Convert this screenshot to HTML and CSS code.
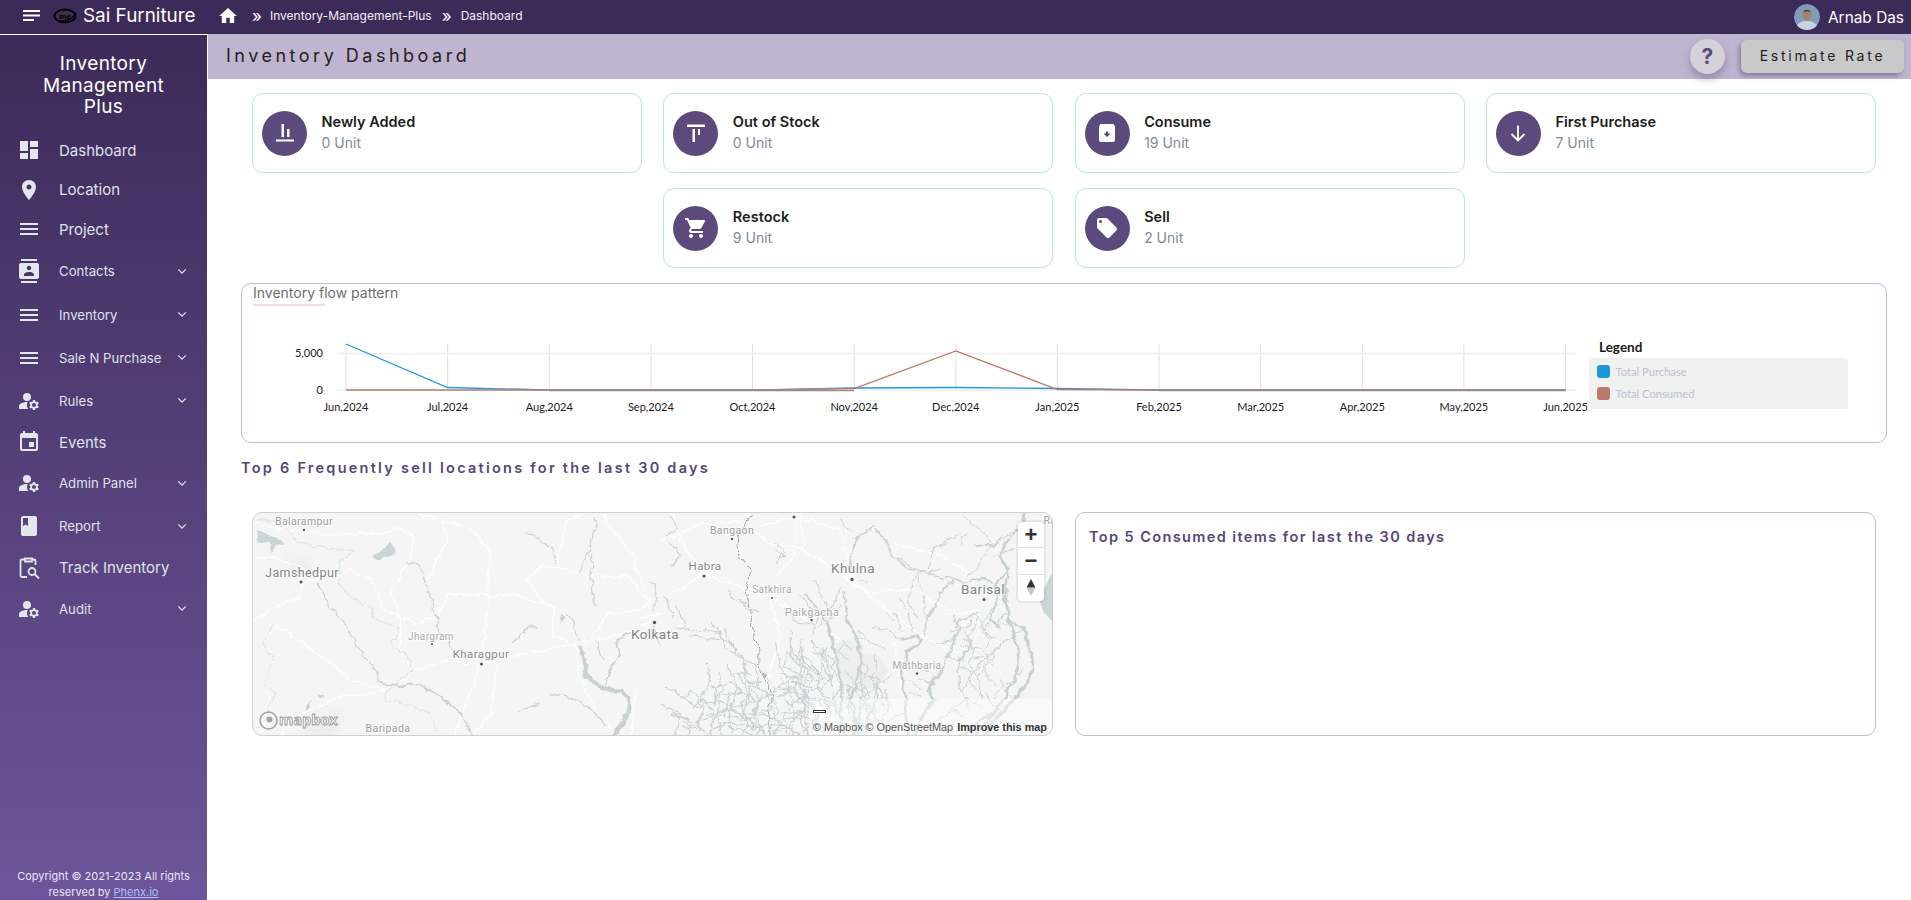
FILE: index.html
```html
<!DOCTYPE html>
<html lang="en">
<head>
<meta charset="utf-8">
<title>Inventory Dashboard</title>
<link rel="stylesheet" href="styles.css">
</head>
<body>
<header class="topbar">
  <svg class="burger" viewBox="0 0 17 12"><rect width="17" height="2"/><rect y="4.5" width="17" height="2"/><rect y="9" width="11" height="2"/></svg>
  <svg class="logo" viewBox="0 0 24 16"><ellipse cx="12" cy="8" rx="10.5" ry="6.5" class="logo-ring"/><path class="logo-swoosh" d="M3 12 C10 15 19 12 23 5"/><text x="12" y="11" class="logo-text">me</text></svg>
  <span class="company">Sai Furniture</span>
  <svg class="home" viewBox="2 3 20 17"><path d="M10 20v-6h4v6h5v-8h3L12 3 2 12h3v8z"/></svg>
  <span class="crumb-sep first">»</span>
  <span class="crumb">Inventory-Management-Plus</span>
  <span class="crumb-sep">»</span>
  <span class="crumb">Dashboard</span>
  <span class="user">
    <svg class="avatar" viewBox="0 0 26 26"><circle cx="13" cy="13" r="13" fill="#7f9dbb"/><path d="M2 23c2-5 7-6 11-6s9 1 11 6a13 13 0 0 1-22 0z" fill="#c6d4dd"/><ellipse cx="13" cy="11" rx="4.6" ry="5.6" fill="#a5816e"/><path d="M8.4 9c0-4 9-4 9.2 0l-.6-1.500h-8z" fill="#3c3230"/></svg>
    <span>Arnab Das</span>
  </span>
</header>

<div class="shell">
  <aside class="sidebar">
    <div class="brand">Inventory Management Plus</div>
    <nav class="nav">
      <a class="nav-item big"><svg class="ico" viewBox="0 0 24 24"><path d="M3 13h8V3H3v10zm0 8h8v-6H3v6zm10 0h8V11h-8v10zm0-18v6h8V3h-8z"/></svg><span>Dashboard</span></a>
      <a class="nav-item big"><svg class="ico" viewBox="0 0 24 24"><path d="M12 2C8.130 2 5 5.130 5 9c0 5.250 7 13 7 13s7-7.750 7-13c0-3.870-3.130-7-7-7zm0 9.500c-1.380 0-2.500-1.120-2.500-2.500s1.120-2.500 2.500-2.500 2.500 1.120 2.500 2.500-1.120 2.500-2.500 2.500z"/></svg><span>Location</span></a>
      <a class="nav-item big"><svg class="ico" viewBox="0 0 24 24"><path d="M3 18h18v-2H3v2zm0-5h18v-2H3v2zm0-7v2h18V6H3z"/></svg><span>Project</span></a>
      <a class="nav-item group first-group"><svg class="ico" viewBox="0 0 24 24"><path d="M20 0H4v2h16V0zM4 24h16v-2H4v2zM20 4H4c-1.100 0-2 .9-2 2v12c0 1.100.9 2 2 2h16c1.100 0 2-.9 2-2V6c0-1.100-.9-2-2-2zm-8 2.750c1.240 0 2.250 1.010 2.250 2.250s-1.010 2.250-2.250 2.250S9.750 10.240 9.750 9 10.760 6.750 12 6.750zM17 17H7v-1.500c0-1.670 3.330-2.500 5-2.500s5 .83 5 2.500V17z"/></svg><span>Contacts</span><svg class="chev" viewBox="0 0 12 8"><path d="M1.500 1.500 6 6l4.500-4.500"/></svg></a>
      <a class="nav-item group"><svg class="ico" viewBox="0 0 24 24"><path d="M3 18h18v-2H3v2zm0-5h18v-2H3v2zm0-7v2h18V6H3z"/></svg><span>Inventory</span><svg class="chev" viewBox="0 0 12 8"><path d="M1.500 1.500 6 6l4.500-4.500"/></svg></a>
      <a class="nav-item group"><svg class="ico" viewBox="0 0 24 24"><path d="M3 18h18v-2H3v2zm0-5h18v-2H3v2zm0-7v2h18V6H3z"/></svg><span>Sale N Purchase</span><svg class="chev" viewBox="0 0 12 8"><path d="M1.500 1.500 6 6l4.500-4.500"/></svg></a>
      <a class="nav-item group"><svg class="ico" viewBox="0 0 24 24"><circle cx="10" cy="8" r="4"/><path d="M10.670 13.020c-.22-.01-.44-.02-.67-.02-2.420 0-4.680.67-6.610 1.820-.88.52-1.390 1.500-1.390 2.530V20h9.260c-.79-1.130-1.260-2.510-1.260-4 0-1.070.25-2.070.67-2.980z"/><path d="M20.750 16c0-.22-.03-.42-.06-.63l1.140-1.010-1-1.730-1.450.49c-.32-.27-.68-.48-1.080-.63L18 11h-2l-.3 1.490c-.4.15-.76.36-1.080.63l-1.450-.49-1 1.730 1.140 1.010c-.03.21-.06.41-.06.63s.03.42.06.63l-1.140 1.010 1 1.730 1.450-.49c.32.27.68.48 1.080.63L16 21h2l.3-1.490c.4-.15.76-.36 1.080-.63l1.450.49 1-1.730-1.140-1.010c.03-.21.06-.41.06-.63zM17 18c-1.100 0-2-.9-2-2s.9-2 2-2 2 .9 2 2-.9 2-2 2z"/></svg><span>Rules</span><svg class="chev" viewBox="0 0 12 8"><path d="M1.500 1.500 6 6l4.500-4.500"/></svg></a>
      <a class="nav-item big"><svg class="ico" viewBox="0 0 24 24"><path d="M17 12h-5v5h5v-5zM16 1v2H8V1H6v2H5c-1.110 0-1.990.9-1.990 2L3 19c0 1.100.89 2 2 2h14c1.100 0 2-.9 2-2V5c0-1.100-.9-2-2-2h-1V1h-2zm3 18H5V8h14v11z"/></svg><span>Events</span></a>
      <a class="nav-item group"><svg class="ico" viewBox="0 0 24 24"><circle cx="10" cy="8" r="4"/><path d="M10.670 13.020c-.22-.01-.44-.02-.67-.02-2.420 0-4.680.67-6.610 1.820-.88.52-1.390 1.500-1.390 2.530V20h9.260c-.79-1.130-1.260-2.510-1.260-4 0-1.070.25-2.070.67-2.980z"/><path d="M20.750 16c0-.22-.03-.42-.06-.63l1.140-1.010-1-1.730-1.450.49c-.32-.27-.68-.48-1.080-.63L18 11h-2l-.3 1.490c-.4.15-.76.36-1.080.63l-1.450-.49-1 1.730 1.140 1.010c-.03.21-.06.41-.06.63s.03.42.06.63l-1.140 1.010 1 1.730 1.450-.49c.32.27.68.48 1.080.63L16 21h2l.3-1.490c.4-.15.76-.36 1.080-.63l1.450.49 1-1.730-1.140-1.010c.03-.21.06-.41.06-.63zM17 18c-1.100 0-2-.9-2-2s.9-2 2-2 2 .9 2 2-.9 2-2 2z"/></svg><span>Admin Panel</span><svg class="chev" viewBox="0 0 12 8"><path d="M1.500 1.500 6 6l4.500-4.500"/></svg></a>
      <a class="nav-item group"><svg class="ico" viewBox="0 0 24 24"><path d="M18 2H6c-1.100 0-2 .9-2 2v16c0 1.100.9 2 2 2h12c1.100 0 2-.9 2-2V4c0-1.100-.9-2-2-2zM6 4h5v8l-2.500-1.500L6 12V4z"/></svg><span>Report</span><svg class="chev" viewBox="0 0 12 8"><path d="M1.500 1.500 6 6l4.500-4.500"/></svg></a>
      <a class="nav-item big"><svg class="ico" viewBox="0 0 24 24"><path class="ico-line" d="M10 21H5a1.500 1.500 0 0 1-1.500-1.500V5A1.500 1.500 0 0 1 5 3.500h3M15 3.500h2A1.500 1.500 0 0 1 18.500 5v4"/><path class="ico-line" d="M8 2.500h7v3H8z"/><circle class="ico-line" cx="15" cy="15.500" r="3.500"/><path class="ico-line" d="m17.500 18 4.500 4.500"/></svg><span>Track Inventory</span></a>
      <a class="nav-item group"><svg class="ico" viewBox="0 0 24 24"><circle cx="10" cy="8" r="4"/><path d="M10.670 13.020c-.22-.01-.44-.02-.67-.02-2.420 0-4.680.67-6.610 1.820-.88.52-1.390 1.500-1.390 2.530V20h9.260c-.79-1.130-1.260-2.510-1.260-4 0-1.070.25-2.070.67-2.980z"/><path d="M20.750 16c0-.22-.03-.42-.06-.63l1.140-1.010-1-1.730-1.450.49c-.32-.27-.68-.48-1.080-.63L18 11h-2l-.3 1.490c-.4.15-.76.36-1.080.63l-1.450-.49-1 1.730 1.140 1.010c-.03.21-.06.41-.06.63s.03.42.06.63l-1.140 1.010 1 1.730 1.450-.49c.32.27.68.48 1.080.63L16 21h2l.3-1.490c.4-.15.76-.36 1.080-.63l1.450.49 1-1.730-1.140-1.010c.03-.21.06-.41.06-.63zM17 18c-1.100 0-2-.9-2-2s.9-2 2-2 2 .9 2 2-.9 2-2 2z"/></svg><span>Audit</span><svg class="chev" viewBox="0 0 12 8"><path d="M1.500 1.500 6 6l4.500-4.500"/></svg></a>
    </nav>
    <footer class="copy">Copyright © 2021-2023 All rights<br>reserved by <a class="copy-link">Phenx.io</a></footer>
  </aside>

  <main class="content">
    <div class="title-bar">
      <h1 class="page-title">Inventory Dashboard</h1>
      <button class="help">?</button>
      <button class="estimate">Estimate Rate</button>
    </div>

    <section class="cards">
      <article class="card">
        <span class="badge"><svg viewBox="0 0 24 24"><rect x="8.500" y="3" width="2.500" height="13"/><rect x="14" y="8" width="2.500" height="8"/><rect x="3" y="18.500" width="18" height="2"/></svg></span>
        <div><h3 class="card-title">Newly Added</h3><p class="card-sub">0 Unit</p></div>
      </article>
      <article class="card">
        <span class="badge"><svg viewBox="0 0 24 24"><rect x="3" y="3.500" width="18" height="2.500"/><rect x="8.500" y="8" width="2.500" height="13"/><rect x="14" y="8" width="2" height="6"/></svg></span>
        <div><h3 class="card-title">Out of Stock</h3><p class="card-sub">0 Unit</p></div>
      </article>
      <article class="card">
        <span class="badge"><svg viewBox="0 0 24 24"><path d="M4 5.500 5.500 3h13L20 5.500V19a2 2 0 0 1-2 2H6a2 2 0 0 1-2-2z"/><path class="badge-cut" d="M12 16 8.500 12.500H11V10.500h2v2h2.500z"/></svg></span>
        <div><h3 class="card-title">Consume</h3><p class="card-sub">19 Unit</p></div>
      </article>
      <article class="card">
        <span class="badge"><svg viewBox="0 0 24 24"><path class="badge-line" d="M12 4.500v15M5.500 13l6.500 6.500 6.500-6.500"/></svg></span>
        <div><h3 class="card-title">First Purchase</h3><p class="card-sub">7 Unit</p></div>
      </article>
      <article class="card">
        <span class="badge"><svg viewBox="0 0 24 24"><path d="M7 18c-1.100 0-1.990.9-1.990 2S5.900 22 7 22s2-.9 2-2-.9-2-2-2zM1 2v2h2l3.600 7.590-1.350 2.450c-.16.28-.25.61-.25.96 0 1.100.9 2 2 2h12v-2H7.420c-.14 0-.25-.11-.25-.25l.03-.12.9-1.630h7.450c.75 0 1.410-.41 1.750-1.030l3.580-6.490c.08-.14.12-.31.12-.48 0-.55-.45-1-1-1H5.210l-.94-2H1zm16 16c-1.100 0-1.990.9-1.990 2s.89 2 1.990 2 2-.9 2-2-.9-2-2-2z"/></svg></span>
        <div><h3 class="card-title">Restock</h3><p class="card-sub">9 Unit</p></div>
      </article>
      <article class="card">
        <span class="badge"><svg viewBox="0 0 24 24"><path d="M21.410 11.580l-9-9C12.050 2.220 11.550 2 11 2H4c-1.100 0-2 .9-2 2v7c0 .55.22 1.050.59 1.420l9 9c.36.36.86.58 1.410.58.55 0 1.050-.22 1.410-.59l7-7c.37-.36.59-.86.59-1.410 0-.55-.23-1.060-.59-1.420zM5.500 7C4.670 7 4 6.330 4 5.500S4.670 4 5.500 4 7 4.670 7 5.500 6.330 7 5.500 7z"/></svg></span>
        <div><h3 class="card-title">Sell</h3><p class="card-sub">2 Unit</p></div>
      </article>
    </section>

    <section class="flow">
      <div class="flow-title">Inventory flow pattern</div>
      <div class="flow-row">
        <svg class="flow-chart" viewBox="0 0 1347 135">
          <g class="grid-v">
            <path d="M104 38V84M205.600 38V84M307.300 38V84M408.900 38V84M510.500 38V84M612.200 38V84M713.800 38V84M815.400 38V84M917 38V84M1018.700 38V84M1120.300 38V84M1221.900 38V84M1323.600 38V84"/>
          </g>
          <g class="grid-h"><path d="M95 47.500H1334M95 84H1334"/></g>
          <path class="line-blue" d="M104 38 205.600 81.500 307.300 84 510.500 84 612.200 82 713.800 81.500 815.400 82.500 917 84 1323.600 84"/>
          <path class="line-red" d="M104 84 510.500 84 612.200 82.500 713.800 45 815.400 83.500 917 84 1323.600 84"/>
          <path class="line-grey" d="M307.300 84.500H612M917 84.500H1323.600"/>
          <g class="axis-y">
            <text x="81" y="51">5,000</text>
            <text x="81" y="87.500">0</text>
          </g>
          <g class="axis-x">
            <text x="104" y="105">Jun,2024</text>
            <text x="205.600" y="105">Jul,2024</text>
            <text x="307.300" y="105">Aug,2024</text>
            <text x="408.900" y="105">Sep,2024</text>
            <text x="510.500" y="105">Oct,2024</text>
            <text x="612.200" y="105">Nov,2024</text>
            <text x="713.800" y="105">Dec,2024</text>
            <text x="815.400" y="105">Jan,2025</text>
            <text x="917" y="105">Feb,2025</text>
            <text x="1018.700" y="105">Mar,2025</text>
            <text x="1120.300" y="105">Apr,2025</text>
            <text x="1221.900" y="105">May,2025</text>
            <text x="1323.600" y="105">Jun,2025</text>
          </g>
        </svg>
        <div class="legend">
          <div class="legend-title">Legend</div>
          <ul class="legend-box">
            <li class="legend-item"><i class="swatch blue"></i>Total Purchase</li>
            <li class="legend-item"><i class="swatch red"></i>Total Consumed</li>
          </ul>
        </div>
      </div>
    </section>

    <h2 class="sec-title">Top 6 Frequently sell locations for the last 30 days</h2>

    <section class="bottom">
      <div class="map">
        <svg class="map-svg" viewBox="0 0 800 224">
          <defs>
            <filter id="wiggle" x="0" y="0" width="100%" height="100%" color-interpolation-filters="sRGB">
              <feTurbulence type="fractalNoise" baseFrequency=".035" numOctaves="3" seed="7" result="n"/>
              <feDisplacementMap in="SourceGraphic" in2="n" scale="22" xChannelSelector="R" yChannelSelector="G"/>
            </filter>
            <filter id="soft" color-interpolation-filters="sRGB"><feGaussianBlur stdDeviation="12"/></filter>
            <clipPath id="lower"><rect x="-200" y="300" width="1200" height="400"/></clipPath>
          </defs>
          <g transform="translate(-12.500,-12.500) scale(.33333)">
            <g class="shade" filter="url(#soft)">
              <path d="M170 700 230 650 300 630 280 715ZM140 170 220 190 200 220 150 200Z"/>
            </g>
            <g filter="url(#wiggle)">
            <g class="roads">
              <path d="M40 60 110 85 190 90 260 105 360 100 410 100 480 85 520 110 510 170 490 200 450 280 480 350 530 370 590 350 620 280 740 285 830 285 940 320 935 400 1000 430"/>
              <path d="M40 360 100 320 180 290 190 200 110 175 40 170"/>
              <path d="M190 245 330 210 400 240 420 320 480 350 480 470 520 510 620 480 720 490 830 465 1000 430 1060 420 1180 390 1240 350"/>
              <path d="M530 40 610 60 620 120 560 240M740 285 750 150 700 90 610 60M745 285 735 400 720 490 680 600 640 710"/>
              <path d="M860 240 900 195 960 205 1050 225 1170 230 1230 320M950 190 980 60 1020 40M1080 40 1180 170 1230 320"/>
              <path d="M100 480 70 540 90 620 60 700M60 430 110 375 190 430 260 480 330 540 440 570 300 590 180 640 120 700"/>
              <path d="M440 570 520 510M770 490 750 640 690 710M1000 430 1030 560 1080 650 1130 700M1190 560 1170 710"/>
              <path d="M1050 420 1100 340 1200 330M860 240 900 300 940 320M1200 330 1260 280M1210 370 1260 400M1200 350 1260 340"/>
            </g>
            <g class="borderline">
              <path d="M165 120 200 135 280 145 350 150 300 180 290 250 330 290 390 320 400 350 470 380 470 420 450 420 460 445 500 460 520 510 480 530 470 560 435 570 440 600 490 610 570 640 590 690"/>
              <path d="M40 60 70 55 110 70 150 95 165 120M100 375 65 430 100 480 70 540 100 580 70 670"/>
            </g>
            <path class="water-fill" d="M45 90 75 100 90 105 130 125 105 135 95 160 85 130 55 125Z"/>
            <path class="water-fill" d="M395 170 420 150 440 140 450 125 470 150 455 165 430 170 415 180Z"/>
            <path class="water-fill" d="M958 338 970 345 970 362 960 362Z"/>
            <path class="water-fill" d="M195 620 210 595 208 625 197 630ZM228 575 250 585 238 595Z"/>
            <g class="w2">
              <path d="M230 250 245 275 270 320 320 380 345 430 375 470 405 510 410 545"/>
              <path d="M855 97 880 100 905 120 935 145 950 190M495 183 530 190 545 220 560 260 575 310 590 360 590 390 620 420 640 445"/>
              <path d="M1060 50 1070 70 1050 130 1015 220M1050 160 1060 200 1050 230 1065 320M835 630 900 610M925 580 990 590 1040 620 1080 650 1095 680M980 345 1000 360 1015 430M1065 420 1085 480"/>
              <path d="M810 430 850 400 860 380 895 378M1230 240 1250 280 1240 330M1240 380 1260 440"/>
            </g>
            <g class="w3">
              <path d="M410 545 440 555 480 560 520 550 545 560 570 570 620 600 660 640 680 670 695 710"/>
              <path d="M1170 395 1130 420 1135 460 1105 520 1095 560"/>
            </g>
            <path class="w9" d="M1015 440 1032 470 1035 520 1060 545 1090 565 1150 572 1170 620 1150 660 1115 715"/>
            <path class="w6" d="M1090 660 1150 640M1100 680 1070 715"/>
            </g>
          </g>

          <g transform="translate(407.500,-12.500) scale(.33333)">
            <g filter="url(#wiggle)">
            <g class="roads">
              <path d="M0 120 130 70 230 60 330 130 420 140 570 240 680 330M0 300 130 220 330 290 450 360 560 430M40 40 60 120 130 225M420 40 430 140M330 290 360 420 320 530"/>
            </g>
            <path class="border-glow" d="M270 40 235 110 230 160 275 210 255 270 275 340 270 380 295 440 295 500 340 590 320 630 335 710"/>
            <path class="border-main" d="M270 40 235 110 230 160 275 210 255 270 275 340 270 380 295 440 295 500 340 590 320 630 335 710"/>
            <g class="w2" id="delta-west">
              <path d="M200 275 230 300 260 310M50 380 130 390 180 400 190 440 250 470 260 540 300 560M10 290 40 350M150 360 190 420"/>
              <path d="M30 50 50 80 20 110M30 125 60 165 30 195M345 150 375 165 340 190"/>
              <path d="M385 410 395 470 420 510 400 570 440 620 420 660 450 710M450 420 500 470 510 530 480 570 510 640 490 710"/>
              <path d="M90 570 130 620 110 670 150 710M140 490 150 540 120 590M200 490 230 560 210 620 260 660 250 710M270 560 240 620 280 680"/>
              <path d="M350 590 400 560 440 620 380 680 420 710M100 620 170 600 220 620 300 600M120 660 180 640 260 660 300 640M180 580 170 640 190 710"/>
              <path d="M395 540 460 600M550 500 590 560 560 620 600 710"/>
              <path d="M0 610 60 640 40 710M20 560 70 590 90 570M150 560 210 550 250 580M60 680 130 690M200 680 280 700M30 640 90 660M220 520 270 520M160 620 170 560M300 640 360 660 340 710M400 640 470 660M360 520 420 540M430 480 470 520"/>
              <path d="M520 560 480 480 500 440M620 650 650 600 640 540M450 500 420 470"/>
            </g>
            <g clip-path="url(#lower)"><use href="#delta-west" transform="translate(35,25)"/></g>
            </g>
          </g>

          <g transform="translate(507.500,-.5) scale(.33333)">
            <path class="forest" d="M225 395 270 380 300 420 350 425 385 470 350 530 290 520 230 500Z"/>
            <g filter="url(#wiggle)">
            <g class="roads">
              <path d="M0 40 100 15 240 50 270 190 320 240 420 320 500 380 600 420M110 20 100 130 40 200M400 90 540 130 620 180 670 270M320 240 450 230 580 300 660 290M400 380 420 520M660 300 640 420 720 480"/>
            </g>
            <g class="w1" id="delta-east">
              <path d="M40 90 70 120 45 140M240 20 270 60M605 10 660 50 700 100M690 100 640 180 620 190M560 90 520 110 500 170M410 130 480 180M540 170 500 175M470 180 440 260 470 320M420 260 440 290M470 190 490 260 500 320M165 205 190 260 210 320M120 240 150 290 200 300M300 200 320 215M290 355 320 375M300 360 280 385 310 410M340 425 350 470 330 500 360 540 400 590M390 480 350 520 380 600"/>
              <path d="M495 470 530 495M650 340 690 370 670 420 700 460M640 300 670 340 680 380M700 280 660 350M740 290 710 330 750 340M780 350 700 420 670 470 710 520M640 430 680 440 650 500 670 560M720 510 750 560M790 470 740 520"/>
              <path d="M90 350 100 420 130 470 120 520 150 580 130 640 150 675M125 380 115 430 160 450M150 390 180 430 215 470M180 470 170 530 210 570 190 640 210 675M60 500 100 560 70 620 80 675M300 440 320 470 300 530 330 590 310 675M260 510 270 560M355 480 340 570 360 675"/>
              <path d="M0 470 40 520 30 580 60 640M40 530 90 500 140 490"/>
              <path d="M330 340 380 355 420 380M200 330 240 280M240 225 210 300"/>
              <path d="M100 490 160 510 220 490M110 570 180 560 240 590M70 620 130 610M200 440 160 420M300 480 370 510M380 620 440 600M480 500 530 520M560 360 620 350 640 310M600 400 660 410M560 600 620 560 660 580M700 100 760 50M700 130 760 110M620 60 600 100M510 120 560 80 600 70"/>
            </g>
            <g clip-path="url(#lower)"><use href="#delta-east" transform="translate(-45,35)"/></g>
            <g class="w3">
              <path d="M345 40 300 70 275 100 270 180M345 50 380 90 400 130 450 170 510 180 540 200 570 190 610 210 640 200 700 205M640 100 700 100 720 70M250 240 260 310"/>
              <path d="M580 200 540 240 510 310 495 330 495 370M575 310 600 340 570 410 550 470M735 180 700 220 710 260 690 320 720 350M660 300 600 320 585 345"/>
              <path d="M130 240 170 290 205 340M600 430 590 470 600 540M640 380 600 440"/>
            </g>
            <g class="w5">
              <path d="M255 310 285 370 305 430 290 500 270 560 290 640 280 675M200 330 215 380 230 450 245 520 240 600 250 675"/>
              <path d="M420 380 470 370 480 385 440 420 420 470 435 560 445 675M550 470 500 530 520 560 480 620 460 675"/>
            </g>
            <path class="w8" d="M795 0 790 30 750 70 720 130 740 170 735 260 745 320 790 350 810 420 820 470 790 530 740 580 690 640 670 675"/>
            <path class="w5" d="M745 320 770 400 775 450 760 510 700 600 640 675M600 675 660 620 720 590"/>
            <path class="w-white" d="M760 50 745 80M790 400 800 420M805 490 770 530M740 100 725 130M760 330 780 350"/>
            </g>
            <path class="water-fill" d="M880 180 870 190 835 260 850 300 880 330Z"/>
          </g>

          <g class="dots">
            <circle cx="51" cy="17" r="1.200"/><circle cx="48" cy="69" r="1.500"/>
            <circle cx="179" cy="131" r="1"/><circle cx="228.500" cy="151" r="1.500"/>
            <circle cx="135" cy="224" r="1.300"/>
            <circle cx="401.500" cy="109.500" r="1.700"/>
            <circle cx="541" cy="4" r="1.500"/><circle cx="479" cy="26" r="1.200"/>
            <circle cx="451" cy="63" r="1.500"/><circle cx="519" cy="85" r="1"/>
            <circle cx="558.500" cy="107" r="1.200"/><circle cx="599" cy="66.500" r="1.700"/>
            <circle cx="731" cy="86.500" r="1.500"/><circle cx="664" cy="160.500" r="1.200"/>
          </g>
          <g class="labels">
            <text class="lb-s" x="51" y="12">Balarampur</text>
            <text class="lb-m" x="49" y="64">Jamshedpur</text>
            <text class="lb-xs" x="178" y="127">Jhargram</text>
            <text class="lb-m2" x="228" y="145">Kharagpur</text>
            <text class="lb-s" x="135" y="219">Baripada</text>
            <text class="lb-l" x="402" y="126">Kolkata</text>
            <text class="lb-s" x="479" y="21">Bangaon</text>
            <text class="lb-m2" x="452" y="57">Habra</text>
            <text class="lb-xs" x="519" y="80">Satkhira</text>
            <text class="lb-xs wide" x="559" y="103">Paikgacha</text>
            <text class="lb-l" x="600" y="60">Khulna</text>
            <text class="lb-l" x="730" y="81">Barisal</text>
            <text class="lb-xs" x="664" y="156">Mathbaria</text>
            <text class="lb-s" x="797" y="11">Ra</text>
          </g>
          <g class="mb-logo">
            <circle cx="15.500" cy="207.500" r="8.500"/>
            <circle class="mb-dot" cx="16.500" cy="206.500" r="3"/>
            <text x="26" y="212">mapbox</text>
          </g>
        </svg>
        <div class="map-ctrl">
          <button class="ctrl-btn plus">+</button>
          <button class="ctrl-btn minus">−</button>
          <button class="ctrl-btn compass"><svg viewBox="0 0 10 17"><path class="up" d="M5 0l4.500 8.500h-9z"/><path class="down" d="M5 17 .5 9h9z"/></svg></button>
        </div>
        <div class="attrib">
          <span class="scale"></span>
          <div>© Mapbox © OpenStreetMap <b class="improve">Improve this map</b></div>
        </div>
      </div>
      <div class="consumed">
        <h2 class="consumed-title">Top 5 Consumed items for last the 30 days</h2>
      </div>
    </section>
  </main>
</div>
</body>
</html>
```
FILE: styles.css
```css
* { box-sizing: border-box; }
html, body { margin: 0; height: 900px; overflow: hidden; background: #fff; }
body { font-family: Inter, "Open Sans", sans-serif; color: #222; }
h1, h2, h3, p, ul { margin: 0; padding: 0; }
button { font-family: inherit; border: 0; cursor: pointer; }

/* top bar */
.topbar { height: 34px; padding-bottom: 3px; background: #3c2b58; color: #fff; display: flex; align-items: center; }
.burger { width: 17px; height: 12px; margin-left: 23px; fill: #fff; flex: none; }
.logo { width: 24px; height: 16px; margin-left: 13px; flex: none; }
.logo-ring { fill: #3a2f4c; stroke: #000; stroke-width: 1.800; }
.logo-swoosh { fill: none; stroke: #000; stroke-width: 1.500; }
.logo-text { font-family: "Liberation Serif", serif; font-size: 9px; font-weight: 700; fill: #000; text-anchor: middle; }
.company { margin-left: 6px; font-size: 18.900px; width: 125px; white-space: nowrap; }
.home { width: 18px; height: 15px; fill: #fff; margin-left: 11px; flex: none; }
.crumb-sep { font-size: 17px; line-height: 1; margin: 2px 9px 0 10px; }
.crumb-sep.first { margin-left: 15px; margin-right: 8px; }
.crumb { font-size: 12px; color: #f2eff7; }
.user { margin: 3px 7px 0 auto; display: flex; align-items: center; gap: 8px; font-size: 15.400px; }
.avatar { width: 26px; height: 26px; border-radius: 50%; flex: none; }

/* shell */
.shell { display: flex; height: 866px; }

/* sidebar */
.sidebar { width: 208px; flex: none; display: flex; flex-direction: column; border-top: 1px solid #fff; border-right: 1px solid #fff;
  background: linear-gradient(180deg, #3c2b58 0%, #6d559b 100%); color: #dfe2ea; }
.brand { padding: 18px 24px 0; height: 95.300px; text-align: center; color: #fff; font-size: 19px; letter-spacing: .35px; line-height: 21.500px; }
.nav { display: flex; flex-direction: column; }
.nav-item { display: flex; align-items: center; padding-left: 17px; color: #dfe2ea; }
.nav-item.big { height: 39.500px; font-size: 15px; }
.nav-item.group { height: 43px; font-size: 13.200px; }
.nav-item.first-group { height: 44.500px; }
.nav-item > span { margin-left: 18px; flex: 1; }
.ico { width: 24px; height: 24px; fill: #e3e6ec; flex: none; }
.ico-line { fill: none; stroke: #e3e6ec; stroke-width: 1.800; }
.chev { width: 10px; height: 7px; flex: none; margin-right: 20px; fill: none; stroke: #e3e6ec; stroke-width: 1.500; }
.copy { margin-top: auto; padding: 0 4px; height: 32px; font-size: 11px; line-height: 16px; text-align: center; color: #e8e4f2; white-space: nowrap; }
.copy-link { color: #a9c0fb; text-decoration: underline; }

/* content */
.content { flex: 1; min-width: 0; display: flex; flex-direction: column; }
.title-bar { height: 45px; background: #bfb5d1; display: flex; align-items: center; padding: 0 7px 0 18px; }
.page-title { font-size: 18px; line-height: 24px; margin-top: -2px; font-weight: 400; letter-spacing: 3.500px; color: #222; margin-right: auto; }
.help { width: 35px; height: 35px; border-radius: 50%; background: #d4d1d8; color: #5b4a7d; font-size: 21px; font-weight: 700; padding: 0;
  box-shadow: 0 5px 8px rgba(70, 55, 100, .35); }
.estimate { width: 163px; height: 33px; margin-left: 16px; border-radius: 6px; background: #c9c9c9; color: #222; font-size: 14px; letter-spacing: 2.750px; padding: 0 0 2px;
  box-shadow: -2px 3px 5px rgba(70, 55, 100, .45); }

.cards { display: flex; flex-wrap: wrap; justify-content: center; gap: 15px 21.300px; margin: 14px 35px 0 44px; }
.card { width: 390px; height: 80px; border: 1px solid #bfe3de; border-radius: 11px; display: flex; align-items: center; padding-left: 9px; background: #fff; }
.badge { width: 45px; height: 45px; border-radius: 50%; background: #5c4a7c; display: flex; align-items: center; justify-content: center; flex: none; margin-right: 14.500px; }
.badge svg { width: 24px; height: 24px; fill: #fff; }
.badge-cut { fill: #5c4a7c; }
.badge-line { fill: none; stroke: #fff; stroke-width: 1.800; }
.card-title { font-size: 14.500px; font-weight: 600; color: #1d1d1d; line-height: 20px; margin-top: -1.500px; }
.card-sub { font-size: 14px; color: #7f8c96; line-height: 21px; margin-top: 0; }

.flow { margin: 15px 24px 0 33px; height: 160px; border: 1px solid #b9bce8; border-radius: 10px; }
.flow-title { margin-left: 11px; width: 72px; height: 22px; white-space: nowrap; font-size: 14px; line-height: 18px; color: #6e6e6e; border-bottom: 2px solid #eee0dc; }
.flow-row { display: flex; align-items: flex-start; }
.flow-chart { width: 1347px; height: 135px; flex: none; }
.grid-v path { stroke: #e0e0e0; fill: none; }
.grid-h path { stroke: #eeeeee; stroke-width: 1.500; fill: none; }
.line-blue { fill: none; stroke: #2298dc; stroke-width: 1.300; }
.line-red { fill: none; stroke: #b97c6c; stroke-width: 1.300; }
.line-grey { fill: none; stroke: #948b8d; stroke-width: 1.500; }
.axis-x text, .axis-y text { font-family: Lato, "Open Sans", sans-serif; font-size: 11px; fill: #1a1a1a; }
.axis-x text { text-anchor: middle; }
.axis-y text { text-anchor: end; }
.legend { width: 259px; margin-top: 32px; font-family: Lato, "Open Sans", sans-serif; }
.legend-title { margin-left: 10px; height: 20px; font-size: 13.500px; font-weight: 700; color: #1a1a1a; line-height: 18px; }
.legend-box { list-style: none; height: 51px; background: #f1f1f1; border-radius: 3px; padding: 7px 8px; display: flex; flex-direction: column; gap: 9px; }
.legend-item { display: flex; align-items: center; gap: 5.500px; height: 13px; font-size: 11.200px; color: #bac2d4; }
.swatch { width: 13px; height: 13px; border-radius: 3px; }
.swatch.blue { background: #1e96dc; }
.swatch.red { background: #b97c6c; }

.sec-title { margin: 16px 0 0 33px; height: 18px; font-size: 14.500px; line-height: 18px; font-weight: 600; letter-spacing: 2.250px; color: #57467a; }

.bottom { display: flex; gap: 22px; margin: 35px 35px 0 44px; }
.map { position: relative; width: 801px; height: 224px; border: 1px solid #d0d0d0; border-radius: 10px; overflow: hidden; background: #f5f5f5; }
.map-svg { display: block; width: 800px; height: 224px; }
.shade path { fill: #ececec; }
.roads path { fill: none; stroke: #fff; stroke-width: 3.500; }
.borderline path { fill: none; stroke: #bfc6c6; stroke-width: 1.500; stroke-dasharray: 5 1; }
.water-fill { fill: #ccd5d6; }
.forest { fill: #eeeeee; }
.w1 path { fill: none; stroke: #c9d1d2; stroke-width: 3; }
.w2 path { fill: none; stroke: #c9d1d2; stroke-width: 3.500; }
.w3 path { fill: none; stroke: #c9d1d2; stroke-width: 5; }
.w5 path, path.w5 { fill: none; stroke: #c9d1d2; stroke-width: 8; }
.w6 { fill: none; stroke: #f5f5f5; stroke-width: 3; }
.w8 { fill: none; stroke: #c9d1d2; stroke-width: 10; }
.w9 { fill: none; stroke: #c9d1d2; stroke-width: 13; }
.w-white { fill: none; stroke: #f5f5f5; stroke-width: 3.500; }
.border-glow { fill: none; stroke: #fff; stroke-width: 7; }
.border-main { fill: none; stroke: #9a9fa0; stroke-width: 3; }
.dots circle { fill: #555; }
.labels text { font-family: Roboto, sans-serif; text-anchor: middle; paint-order: stroke; stroke: rgba(255, 255, 255, .8); stroke-width: 1.500px; letter-spacing: .4px; }
.lb-xs { font-size: 10px; fill: #a6aaaa; }
.labels .lb-xs.wide { font-size: 11px; }
.lb-s { font-size: 10.500px; fill: #9a9e9e; }
.lb-m2 { font-size: 11.500px; fill: #868a8a; }
.lb-m { font-size: 12.500px; fill: #808484; }
.lb-l { font-size: 13.500px; fill: #808484; }
.mb-logo circle { fill: none; stroke: #a2a6a6; stroke-width: 1.600; }
.mb-logo .mb-dot { fill: #a2a6a6; stroke: none; }
.mb-logo text { font-family: "Open Sans", sans-serif; font-weight: 700; font-size: 14.500px; fill: #fff; stroke: #999d9d; stroke-width: .9px; }

.map-ctrl { position: absolute; top: 9px; right: 8px; width: 26px; background: #fff; border-radius: 4px; box-shadow: 0 0 0 2px rgba(0, 0, 0, .06); display: flex; flex-direction: column; }
.ctrl-btn { height: 26.300px; padding: 0; background: transparent; font-size: 22px; font-weight: 700; line-height: 1; color: #333; border-bottom: 1px solid #ddd; font-family: "Liberation Sans", sans-serif; display: flex; align-items: center; justify-content: center; }
.ctrl-btn.compass { border-bottom: 0; }
.compass svg { width: 10px; height: 17px; }
.compass .up { fill: #333; }
.compass .down { fill: #c4c4c4; }
.attrib { position: absolute; right: 0; bottom: 0; width: 243px; height: 36px; padding: 0 6px 0 4px; background: rgba(255, 255, 255, .45); font-family: "Liberation Sans", sans-serif; font-size: 10.850px; line-height: 15px; color: #555; white-space: nowrap; display: flex; flex-direction: column; justify-content: flex-end; }
.scale { display: block; width: 13px; height: 3px; border: 1px solid #333; background: #fff; margin: 0 0 7px 0; }
.improve { color: #333; margin-left: 1px; }
.consumed { flex: 1; height: 224px; border: 1px solid #b9bce8; border-radius: 10px; padding: 15px 13px; }
.consumed-title { font-size: 14.500px; line-height: 18px; font-weight: 600; letter-spacing: 1.400px; color: #57467a; }
```
